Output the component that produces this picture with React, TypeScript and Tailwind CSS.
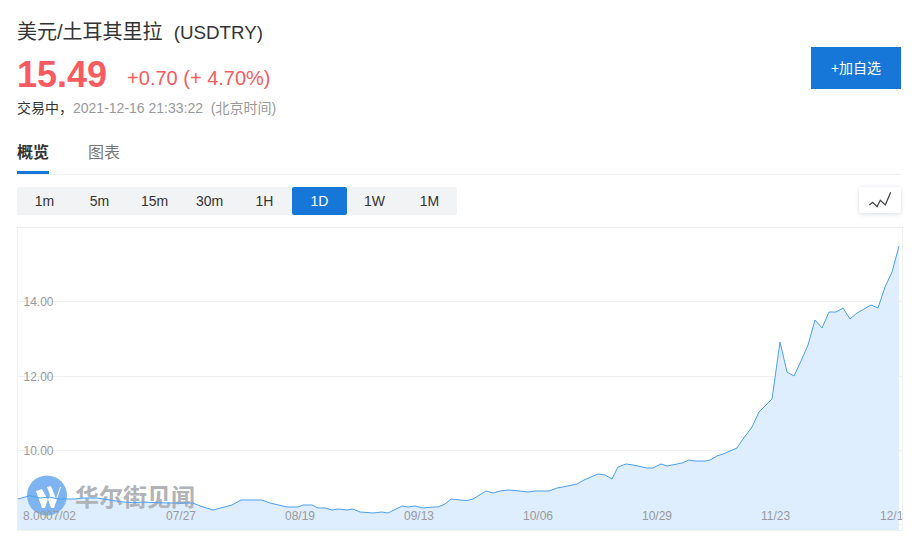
const frames = ["1m", "5m", "15m", "30m", "1H", "1D", "1W", "1M"];

const linePoints =
  "18,499 30,495.7 40,498 50,497 58,499 75,499 83,498 97,498 110,500 120,501.7 133,502.7 143,502 157,502.7 173,503 193,503 200,506 213,510 232,505 241,500 250,500 262,500 270,503 287,507 298,507 303,505 312,505 318,508 325,508 332,510 338,509 347,510 353,509 360,512 373,513 382,512 388,513 402,506 408,507 415,506 423,508 433,507 438,507 445,504 451,499 460,500 467,500.5 473,499 486,491 493,493 500,491 508,490 515,490.5 528,492 535,491 549,491 557,488 563,487 577,484 584,480 598,474 605,475 612,479 618,467 626,464 633,465 647,468 653,468 661,464 667,466 682,463 689,460 695,461 705,461 710,460 717,456 723,454 737,448 743,439 752,427 759,412 772,399 780,342 787,372 794,376 801,361 808,345 815,320 822,328 829,312 836,312 843,308 850,319 857,313 864,309 871,305 878,308 885,287 892,272 899,246";

const dates = [
  ["07/02", 46],
  ["07/27", 166],
  ["08/19", 285],
  ["09/13", 404],
  ["10/06", 523],
  ["10/29", 642],
  ["11/23", 761],
  ["12/16", 880],
] as const;

function Chart() {
  return (
    <svg viewBox="18 228 884 302" className="block h-full w-full">
      {[301, 376, 450, 524].map((y) => (
        <line key={y} x1="18" x2="902" y1={y + 0.5} y2={y + 0.5} stroke="#f0f0f0" />
      ))}
      <polygon points={`18,530 ${linePoints} 899,530`} fill="#deeeff" />

      {/* 水印 */}
      <circle cx="47" cy="495.5" r="20" fill="#7fb4f3" />
      <path
        d="M36 491l6-2 6 11 2-5-3-8 4-1 5 13 4-12 1 0-7 21-3 0-3-9-3 9-3 0z"
        fill="#fff"
      />
      <text x="75" y="506" fontSize="24" fontWeight="700" fill="#b0b3b7">
        华尔街见闻
      </text>

      <polyline points={linePoints} fill="none" stroke="#4a9ff5" strokeWidth="1" />

      {[
        ["14.00", 301],
        ["12.00", 376],
        ["10.00", 450],
      ].map(([label, y]) => (
        <text key={label} x="23.5" y={Number(y) + 4.5} fontSize="12" fill="#999">
          {label}
        </text>
      ))}
      <text x="23" y="519.5" fontSize="12" fill="#999">
        8.00
      </text>
      {dates.map(([label, x]) => (
        <text key={label} x={x} y="519.5" fontSize="12" fill="#999">
          {label}
        </text>
      ))}
    </svg>
  );
}

export default function App() {
  return (
    <div className="h-[543px] w-[919px] overflow-hidden bg-white pl-[17px] pr-[18px] font-['Liberation_Sans','Noto_Sans_CJK_SC',sans-serif]">
      <div className="flex items-start justify-between">
        <div>
          <h1 className="mt-[18px] h-[28px] text-[20px] leading-[28px] font-normal whitespace-pre text-[#333]">
            美元/土耳其里拉  <span className="text-[18.8px]">(USDTRY)</span>
          </h1>
          <div className="mt-[8px] flex h-[42px] items-center text-[#f95b61]">
            <span className="text-[36px] leading-[42px] font-bold">15.49</span>
            <span className="mt-[6px] ml-[20px] text-[20px] leading-[28px]">+0.70 (+ 4.70%)</span>
          </div>
          <p className="mt-[3px] h-[18px] text-[14px] leading-[18px] whitespace-pre text-[#999]">
            <span className="text-[#333]">交易中，</span>2021-12-16 21:33:22  (北京时间)
          </p>
        </div>
        <button className="mt-[47px] h-[42px] w-[90px] bg-[#1677d9] text-[14px] text-white">
          +加自选
        </button>
      </div>

      <div className="mt-[19px] flex h-[39px] gap-[39px] border-b border-[#f0f0f0] text-[16px]">
        <div className="h-[38px] w-[32px] border-b-[3px] border-[#1677d9] pt-[5px] leading-[24px] font-bold text-[#333]">
          概览
        </div>
        <div className="pt-[5px] leading-[24px] text-[#777]">图表</div>
      </div>

      <div className="mt-[12px] flex items-start justify-between">
        <div className="flex h-[28px] w-[440px] rounded-[2px] bg-[#f2f3f5]">
          {frames.map((f) => (
            <div
              key={f}
              className={
                f === "1D"
                  ? "flex w-[55px] items-center justify-center rounded-[2px] bg-[#1677d9] text-[14px] text-white"
                  : "flex w-[55px] items-center justify-center text-[14px] text-[#333]"
              }
            >
              {f}
            </div>
          ))}
        </div>
        <div className="flex h-[26px] w-[42px] items-center justify-center rounded-[2px] bg-white shadow-[0_1px_4px_rgba(40,60,120,0.18)]">
          <svg width="24" height="18" viewBox="867 190 24 18" fill="none" stroke="#444" strokeWidth="1.3">
            <path d="M868.3 204l3.4-2.7 4.3 4.4 3.3-6.4 5 4.7 5.4-12.7" />
          </svg>
        </div>
      </div>

      <div className="mt-[12px] h-[304px] w-[886px] border border-[#f0f0f0]">
        <Chart />
      </div>
    </div>
  );
}
